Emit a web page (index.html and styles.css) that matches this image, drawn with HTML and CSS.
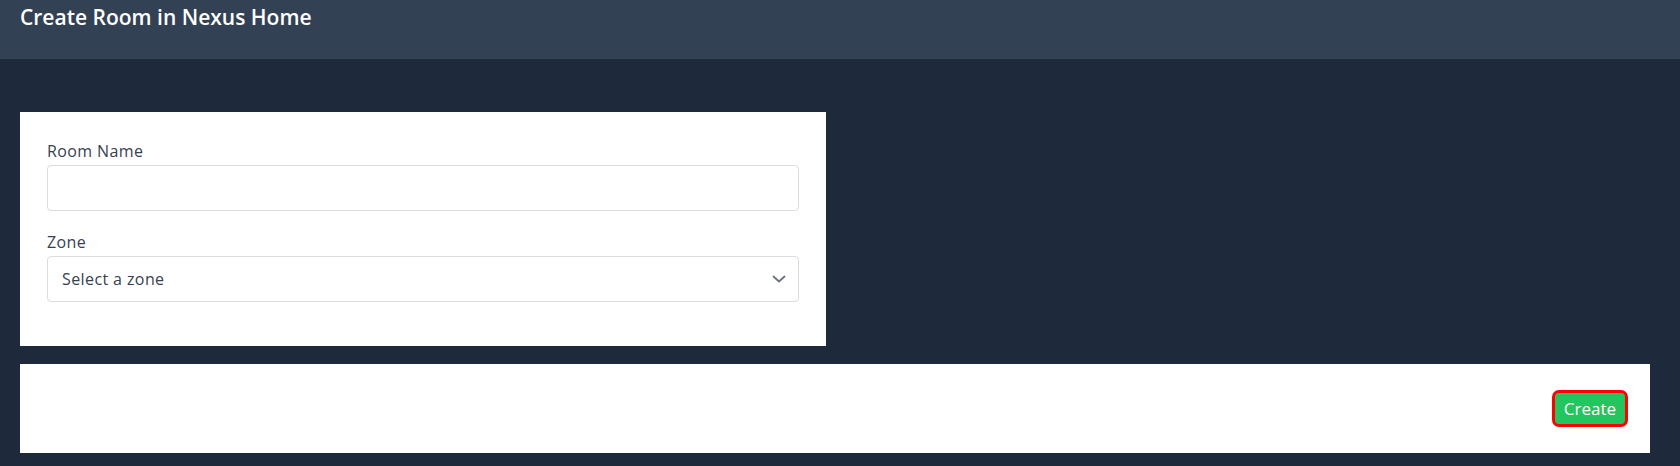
FILE: index.html
```html
<!DOCTYPE html>
<html lang="en">
<head>
  <meta charset="UTF-8">
  <title>Create Room in Nexus Home</title>
  <link rel="stylesheet" href="styles.css">
</head>
<body>
  <header class="topbar">
    <h1>Create Room in Nexus Home</h1>
  </header>

  <main class="content">
    <form class="card form-card">
      <div class="field">
        <label for="room-name">Room Name</label>
        <input id="room-name" type="text">
      </div>
      <div class="field">
        <label for="zone">Zone</label>
        <div class="select-wrap">
          <select id="zone">
            <option>Select a zone</option>
          </select>
          <svg class="chevron" width="14" height="8" viewBox="0 0 14 8">
            <path d="M1.5 1.5 L7 6.5 L12.5 1.5" fill="none" stroke="#6b7280" stroke-width="1.8" stroke-linecap="round" stroke-linejoin="round"/>
          </svg>
        </div>
      </div>
    </form>

    <div class="card action-card">
      <button class="create-button">Create</button>
    </div>
  </main>
</body>
</html>
```

FILE: styles.css
```css
* {
  box-sizing: border-box;
}

body {
  margin: 0;
  font-family: 'Open Sans', 'Noto Sans', sans-serif;
  background: #1e293b;
  color: #374151;
}

.topbar {
  background: #334155;
  height: 59px;
  padding: 2px 20px 0;
}

.topbar h1 {
  margin: 0;
  color: #ffffff;
  font-size: 21px;
  font-weight: 600;
  line-height: 30px;
}

.content {
  padding: 53px 30px 0 20px;
  display: flex;
  flex-direction: column;
  gap: 18px;
}

.card {
  background: #ffffff;
}

.form-card {
  width: 806px;
  height: 234px;
  padding: 27px 27px 0;
}

.field {
  margin-bottom: 19px;
}

.field label {
  display: block;
  font-size: 16px;
  line-height: 24px;
  letter-spacing: 0.4px;
  margin-bottom: 2px;
  color: #374151;
}

.field input,
.field select {
  display: block;
  width: 100%;
  height: 46px;
  border: 1px solid #d9dce1;
  border-radius: 4px;
  background: #ffffff;
  font-family: inherit;
  font-size: 16px;
  letter-spacing: 0.4px;
  color: #374151;
  padding: 0 14px;
  outline: none;
}

.select-wrap {
  position: relative;
}

.field select {
  appearance: none;
  -webkit-appearance: none;
}

.chevron {
  position: absolute;
  right: 13px;
  top: 19px;
  pointer-events: none;
}

.action-card {
  height: 89px;
  display: flex;
  align-items: center;
  justify-content: flex-end;
  padding: 0 22px 1px;
}

.create-button {
  background: #22c55e;
  color: #ffffff;
  border: 3px solid #ff0000;
  border-radius: 7px;
  font-family: inherit;
  font-size: 17px;
  line-height: 25px;
  height: 37px;
  padding: 0 9px;
  cursor: pointer;
}
```
